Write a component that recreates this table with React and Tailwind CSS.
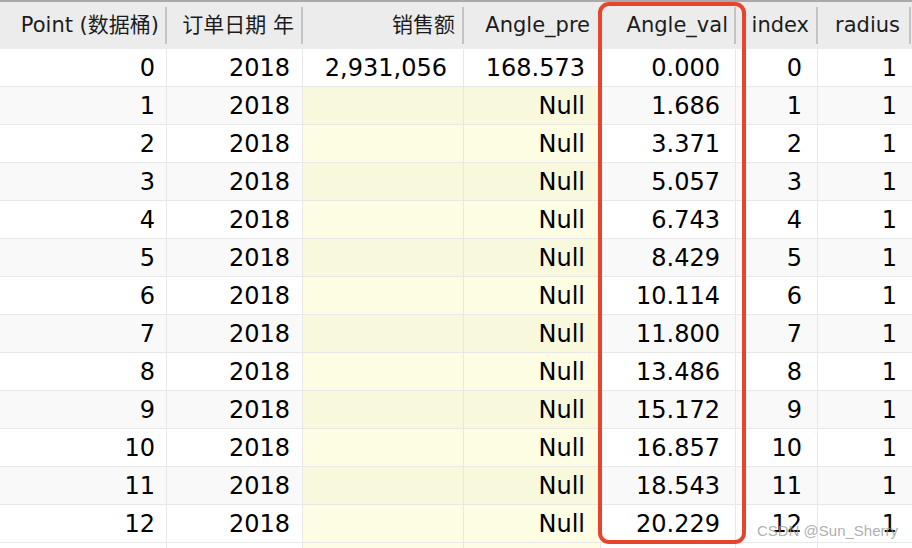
const columns = [
  { title: 'Point (数据桶)', hpad: 'pr-[8px]', bpad: 'pr-[11px]' },
  { title: '订单日期 年', hpad: 'pr-[9px]', bpad: 'pr-[12px]' },
  { title: '销售额', hpad: 'pr-[9px]', bpad: 'pr-[16px]' },
  { title: 'Angle_pre', hpad: 'pr-[11px]', bpad: 'pr-[15px]' },
  { title: 'Angle_val', hpad: 'pr-[8px]', bpad: 'pr-[15px]' },
  { title: 'index', hpad: 'pr-[9px]', bpad: 'pr-[15px]' },
  { title: 'radius', hpad: 'pr-[11px]', bpad: 'pr-[14px]' },
];

const angles = [
  '0.000', '1.686', '3.371', '5.057', '6.743', '8.429', '10.114',
  '11.800', '13.486', '15.172', '16.857', '18.543', '20.229',
];

const rows = angles.map((a, i) => ({
  point: String(i),
  year: '2018',
  sales: i === 0 ? '2,931,056' : '',
  pre: i === 0 ? '168.573' : 'Null',
  val: a,
  index: String(i),
  radius: '1',
}));

const gridCols = 'grid grid-cols-[167px_136px_161px_137px_135px_82px_93px_1fr]';

function HeaderCell({ col }) {
  return (
    <div className={`relative flex items-center justify-end h-[47px] ${col.hpad}`}>
      <span className="whitespace-nowrap">{col.title}</span>
      <div className="absolute right-0 top-[5px] bottom-[5px] w-[2px] bg-[#c4c4c4]" />
    </div>
  );
}

function Cell({ children, className = '' }) {
  return (
    <div
      className={`flex items-center justify-end h-[38px] border-r border-b border-[#e8e8e8] whitespace-nowrap ${className}`}
    >
      {children}
    </div>
  );
}

export default function App() {
  return (
    <div
      className="relative w-[912px] h-[548px] overflow-hidden bg-white text-black"
      style={{ fontFamily: '"DejaVu Sans", "Noto Sans CJK SC", sans-serif' }}
    >
      {/* Header */}
      <div className={`${gridCols} border-t-2 border-[#a9a9a9] bg-[#ececec] text-[21px] text-[#1c1c1c]`}>
        {columns.map((c) => (
          <HeaderCell key={c.title} col={c} />
        ))}
        <div />
      </div>

      {/* Body */}
      <div className="text-[24px]">
        {rows.map((r, i) => {
          const odd = i % 2 === 1;
          const base = odd ? 'bg-[#f9f9f9]' : 'bg-white';
          const yellow = i === 0 ? 'bg-white' : odd ? 'bg-[#f8f8dc]' : 'bg-[#fdfde4]';
          return (
            <div key={i} className={gridCols}>
              <Cell className={`${base} ${columns[0].bpad}`}>{r.point}</Cell>
              <Cell className={`${base} ${columns[1].bpad}`}>{r.year}</Cell>
              <Cell className={`${yellow} ${columns[2].bpad}`}>{r.sales}</Cell>
              <Cell className={`${yellow} ${columns[3].bpad}`}>{r.pre}</Cell>
              <Cell className={`${base} ${columns[4].bpad}`}>{r.val}</Cell>
              <Cell className={`${base} ${columns[5].bpad}`}>{r.index}</Cell>
              <Cell className={`${base} ${columns[6].bpad} border-r-0`}>{r.radius}</Cell>
              <div className={`${base} border-b border-[#e8e8e8]`} />
            </div>
          );
        })}
        <div className={gridCols}>
          <div className="h-[10px] border-r border-[#e8e8e8]" />
          <div className="h-[10px] border-r border-[#e8e8e8]" />
          <div className="h-[10px] border-r border-[#e8e8e8] bg-[#fdfde4]" />
          <div className="h-[10px] border-r border-[#e8e8e8] bg-[#fdfde4]" />
          <div className="h-[10px] border-r border-[#e8e8e8]" />
          <div className="h-[10px] border-r border-[#e8e8e8]" />
          <div className="h-[10px]" />
          <div />
        </div>
      </div>

      {/* Highlight box */}
      <div className="absolute left-[598px] top-[2px] w-[148px] h-[542px] rounded-[11px] border-4 border-[#e8432d] pointer-events-none" />

      {/* Watermark */}
      <div
        className="absolute right-[14px] bottom-[10px] text-[15px] text-[#9a9a9a]/80 leading-none"
        style={{ fontFamily: '"Liberation Sans", Arial, sans-serif' }}
      >
        CSDN @Sun_Sherry
      </div>
    </div>
  );
}
